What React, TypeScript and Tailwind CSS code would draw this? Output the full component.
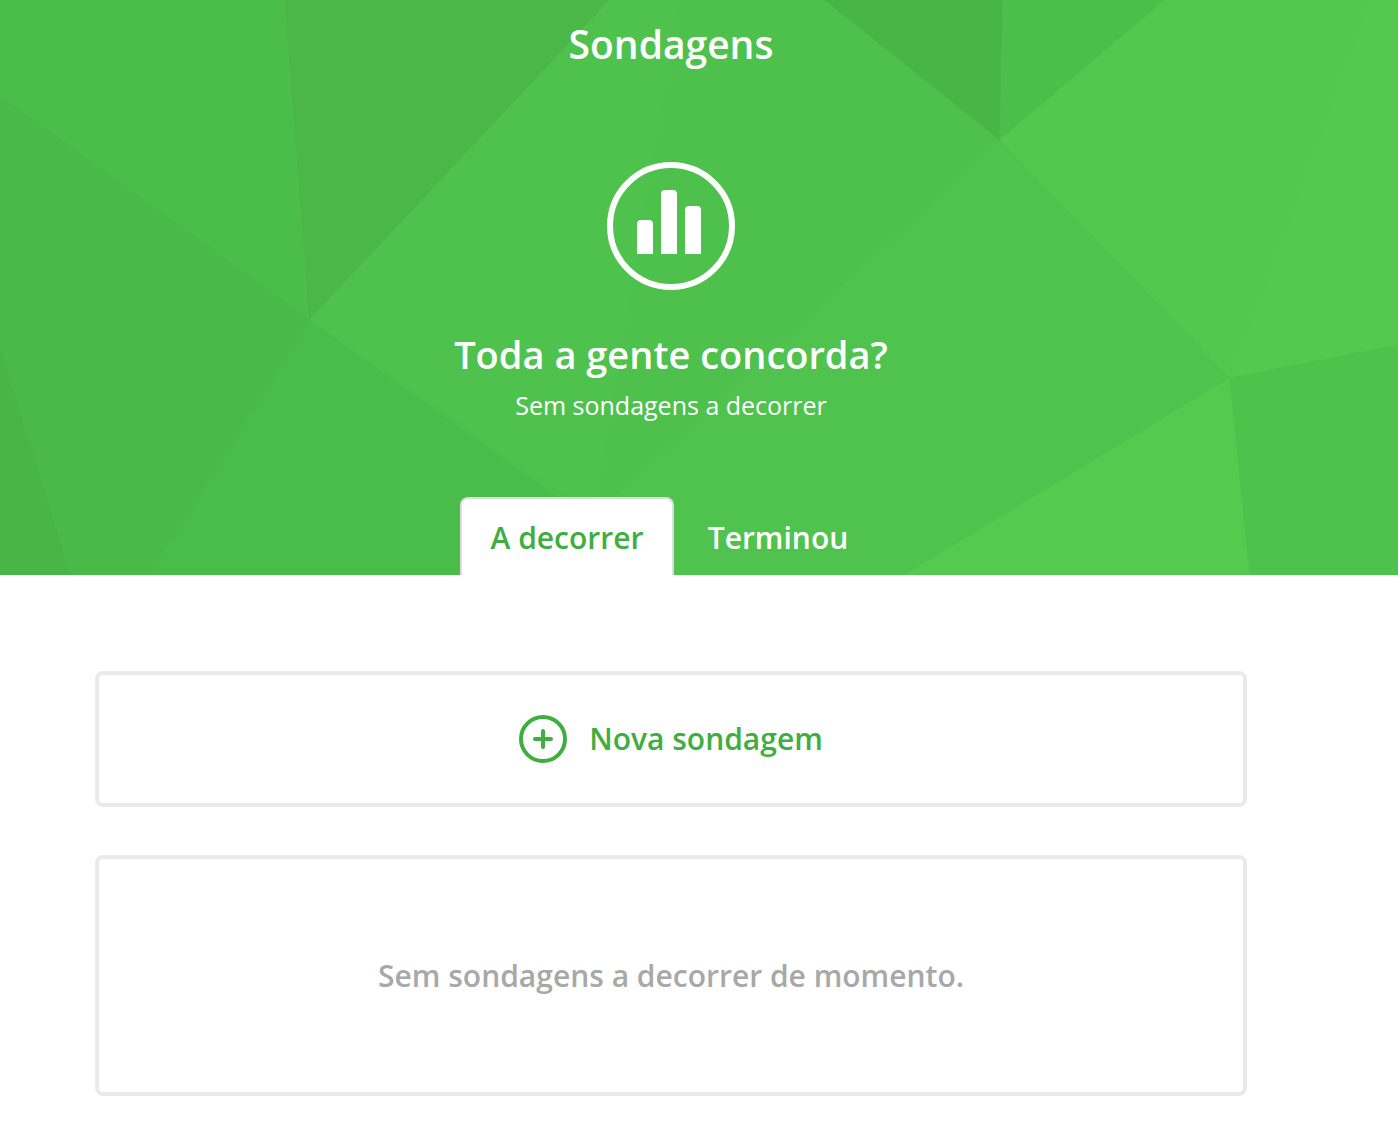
import { useState } from 'react';

type TabId = 'running' | 'ended';

const facets = [
  { points: '0,0 285,0 310,320 0,96', fill: '#4bbe4a' },
  { points: '0,96 310,320 150,575 70,575 0,350', fill: '#49ba47' },
  { points: '0,350 70,575 0,575', fill: '#48b546' },
  { points: '285,0 610,0 310,320', fill: '#4ab747' },
  { points: '310,320 600,520 600,575 150,575', fill: '#4abc49' },
  { points: '610,0 825,0 1000,140 590,520 310,320', fill: '#4ec14d' },
  { points: '610,0 680,0 595,515 310,320', fill: '#4fc24e' },
  { points: '1000,140 1230,378 905,575 590,575 590,520', fill: '#50c34e' },
  { points: '825,0 1003,0 1000,140', fill: '#48b645' },
  { points: '1003,0 1165,0 1000,140', fill: '#4cbf4b' },
  { points: '1165,0 1398,0 1398,345 1230,378 1000,140', fill: '#53c74e' },
  { points: '1370,0 1398,0 1398,345 1230,378 1290,220', fill: '#55c94f' },
  { points: '1230,378 1250,575 905,575', fill: '#56c94f' },
  { points: '1230,378 1398,345 1398,575 1250,575', fill: '#4fc24e' },
];

const tabs: { id: TabId; label: string; width: string }[] = [
  { id: 'running', label: 'A decorrer', width: 'w-[214px]' },
  { id: 'ended', label: 'Terminou', width: 'w-[208px]' },
];

function FacetBackdrop() {
  return (
    <svg
      className="absolute inset-0 h-full w-full"
      viewBox="0 0 1398 575"
      preserveAspectRatio="none"
      aria-hidden
    >
      <rect width="1398" height="575" fill="#4dc04c" />
      {facets.map((f) => (
        <polygon key={f.points} points={f.points} fill={f.fill} stroke={f.fill} />
      ))}
    </svg>
  );
}

function PollIcon() {
  return (
    <svg className="size-32" viewBox="0 0 128 128" fill="none" aria-hidden>
      <circle cx="64" cy="64" r="61" stroke="#fff" strokeWidth="6" />
      <path
        d="M30 92V62a4 4 0 0 1 4-4h8a4 4 0 0 1 4 4v30zM54 92V32a4 4 0 0 1 4-4h8a4 4 0 0 1 4 4v60zM78 92V48a4 4 0 0 1 4-4h8a4 4 0 0 1 4 4v44z"
        fill="#fff"
      />
    </svg>
  );
}

function PlusIcon() {
  return (
    <svg className="size-12" viewBox="0 0 48 48" fill="none" stroke="currentColor" strokeWidth="4" strokeLinecap="round" aria-hidden>
      <circle cx="24" cy="24" r="22" />
      <path d="M16 24h16M24 16v16" />
    </svg>
  );
}

export default function App() {
  const [active, setActive] = useState<TabId>('running');

  return (
    <div className="min-h-screen bg-white font-['Open_Sans',sans-serif]">
      <header className="relative pr-14 text-white">
        <FacetBackdrop />
        <div className="relative flex flex-col items-center">
          <h1 className="pt-[14px] text-[39px] leading-[60px] font-semibold">Sondagens</h1>
          <div className="mt-[88px]">
            <PollIcon />
          </div>
          <h2 className="mt-[34px] text-[38px] leading-[60px] font-semibold">Toda a gente concorda?</h2>
          <p className="text-[25px] leading-[42px]">Sem sondagens a decorrer</p>

          <div role="tablist" className="mt-[71px] flex">
            {tabs.map((t) => (
              <button
                key={t.id}
                type="button"
                role="tab"
                aria-selected={active === t.id}
                onClick={() => setActive(t.id)}
                className={`${t.width} h-[78px] rounded-t-lg border-2 border-b-0 pt-[2px] text-[30px] leading-[44px] font-semibold ${
                  active === t.id ? 'border-[#dcdcdc] bg-white text-[#3fae40]' : 'border-transparent text-white'
                }`}
              >
                {t.label}
              </button>
            ))}
          </div>
        </div>
      </header>

      <main className="pt-24 pr-14 pb-11">
        <div className="mx-auto flex max-w-[1152px] flex-col gap-12">
          <button
            type="button"
            className="flex h-[136px] items-center justify-center gap-[22px] rounded-lg border-4 border-[#eaeaea] text-[30px] leading-[44px] font-semibold text-[#3fae40]"
          >
            <PlusIcon />
            Nova sondagem
          </button>
          <div className="flex h-[241px] items-center justify-center rounded-lg border-4 border-[#eaeaea] text-center">
            <p className="text-[30px] leading-[44px] font-semibold text-[#a8a8a8]">Sem sondagens a decorrer de momento.</p>
          </div>
        </div>
      </main>
    </div>
  );
}
